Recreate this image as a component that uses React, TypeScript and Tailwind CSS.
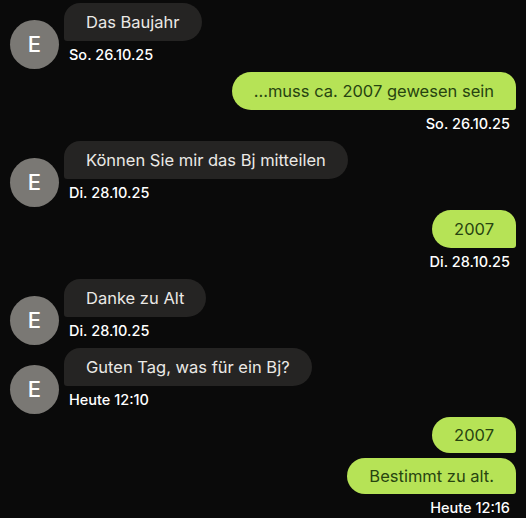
import React from "react";

type Msg = {
  from: "them" | "me";
  texts: string[];
  date: string;
};

const messages: Msg[] = [
  { from: "them", texts: ["Das Baujahr"], date: "So. 26.10.25" },
  { from: "me", texts: ["...muss ca. 2007 gewesen sein"], date: "So. 26.10.25" },
  { from: "them", texts: ["Können Sie mir das Bj mitteilen"], date: "Di. 28.10.25" },
  { from: "me", texts: ["2007"], date: "Di. 28.10.25" },
  { from: "them", texts: ["Danke zu Alt"], date: "Di. 28.10.25" },
  { from: "them", texts: ["Guten Tag, was für ein Bj?"], date: "Heute 12:10" },
  { from: "me", texts: ["2007", "Bestimmt zu alt."], date: "Heute 12:16" },
];

// avatar hangs a little below the date line, so it gets a negative bottom margin
const Avatar = () => (
  <div className="-mb-[4px] mt-[17px] flex h-[49px] w-[49px] shrink-0 items-center justify-center rounded-full bg-[#7a7874] text-[22px] font-medium text-white">
    E
  </div>
);

const Incoming = ({ msg }: { msg: Msg }) => (
  <div className="mb-[7px] flex items-start gap-[5px]">
    <Avatar />
    <div className="flex flex-col items-start">
      <div className="h-[38px] rounded-[19px] rounded-tl-[16px] rounded-bl-[3px] bg-[#252423] px-[22px] text-[16.5px] leading-[38px] text-[#ebe9e6]">
        {msg.texts[0]}
      </div>
      <div className="ml-[5px] mt-[4px] text-[14.5px] font-medium leading-[20px] text-white">
        {msg.date}
      </div>
    </div>
  </div>
);

const Outgoing = ({ msg }: { msg: Msg }) => {
  const many = msg.texts.length > 1;
  return (
    <div className="mb-[7px] flex flex-col items-end">
      <div className="flex flex-col items-end gap-[5px]">
        {msg.texts.map((t, i) => (
          <div
            key={i}
            className={
              many
                ? "h-[36px] rounded-[18px] rounded-tr-[15px] rounded-br-[3px] bg-[#b6e356] px-[22px] text-[16.5px] leading-[36px] text-[#274410]"
                : "h-[38px] rounded-[19px] rounded-tr-[15px] rounded-br-[3px] bg-[#b6e356] px-[22px] text-[16.5px] leading-[38px] text-[#274410]"
            }
          >
            {t}
          </div>
        ))}
      </div>
      <div className="mr-[6px] mt-[4px] text-[14.5px] font-medium leading-[20px] text-white">
        {msg.date}
      </div>
    </div>
  );
};

export default function App() {
  return (
    <div
      className="h-[518px] w-full overflow-hidden bg-[#0a0a0a] px-[10px] pt-[3px]"
      style={{ fontFamily: "Inter, 'Liberation Sans', sans-serif" }}
    >
      {messages.map((m, i) =>
        m.from === "them" ? <Incoming key={i} msg={m} /> : <Outgoing key={i} msg={m} />
      )}
    </div>
  );
}
